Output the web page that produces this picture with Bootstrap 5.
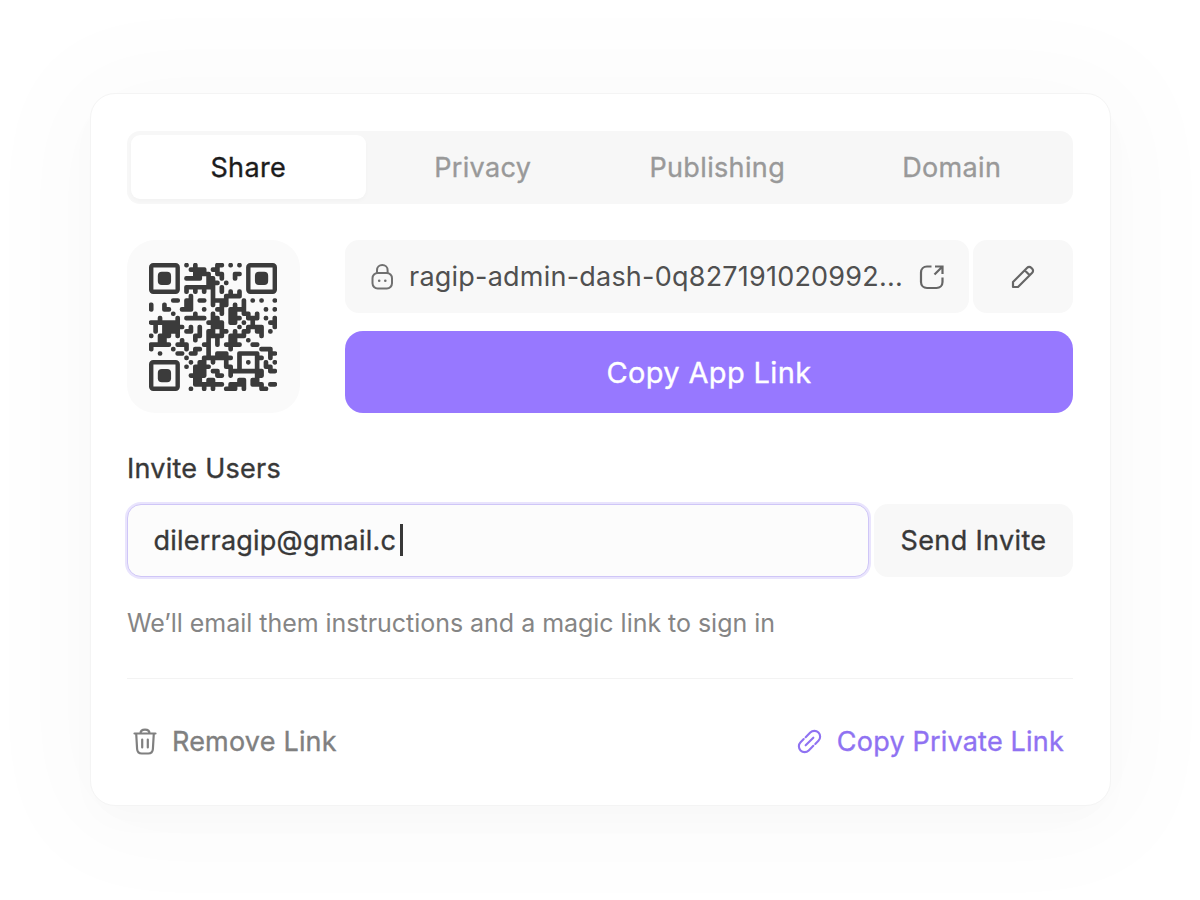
<!DOCTYPE html>
<html lang="en">
<head>
<meta charset="utf-8">
<meta name="viewport" content="width=device-width, initial-scale=1">
<title>Share</title>
<link href="https://cdn.jsdelivr.net/npm/bootstrap@5.3.0/dist/css/bootstrap.min.css" rel="stylesheet">
<style>
body{font-family:Inter,"Liberation Sans",sans-serif;background:#fff;height:900px;overflow:hidden;color:#383838;font-size:27px;line-height:36px}
.share-card{width:1021px;height:713px;margin-top:93px;border:1px solid #f4f4f4;border-radius:25px;background:#fff;padding:37px 36.5px 0;box-shadow:0 16px 40px -8px rgba(0,0,0,.022),0 6px 110px 36px rgba(0,0,0,.018)}
.semi{font-weight:400;-webkit-text-stroke:.35px currentColor}
.share-tabs{height:73px;padding:4px;background:#f7f7f7;border-radius:13px}
.share-tabs .nav-link{color:#999;height:64px;padding:1px 0 0;border-radius:9px;letter-spacing:.35px;display:flex;align-items:center;justify-content:center}
.share-tabs .nav-link.active{background:#fff;color:#1c1c1c;box-shadow:0 2px 4px rgba(0,0,0,.025)}
.share-row{margin-top:36px}
.share-link{width:728px}
.qr-tile{width:173px;height:173px;padding-right:1px;border-radius:28px;background:#fafafa}
.soft{background:#f8f8f8;border-radius:14px;height:73px}
.url-box{width:624px;padding-left:25.5px}
.url-text{color:#505050;letter-spacing:.22px;margin-left:15.5px;padding-top:1px}
.btn-copy{background:#9778ff;color:#fff;border-radius:18px;height:82px;margin-top:18px;padding:1px 0 0;font-size:29px;letter-spacing:.35px}
.btn-copy:hover{background:#8a66fa;color:#fff}
.invite-title{margin-top:38px;letter-spacing:.25px}
.invite-row{margin-top:16.5px}
.btn-send{width:199px;font-size:27px;color:#383838;letter-spacing:.35px;padding:2px 0 0;border:0}
.mail{width:742px;height:73px;margin-left:-.5px;border:1.5px solid #cfc6f7;border-radius:14px;background:#fcfcfc;box-shadow:0 0 0 2px #e9e4fd;padding:2px 0 0 26px;letter-spacing:.22px}
.caret{width:2.5px;height:32px;margin:-3px 0 0 4px;background:#383838}
.hint{color:#858585;font-size:25px;margin-top:28px;letter-spacing:-.03px}
.rule{height:1px;background:#f3f3f3;margin-top:37px}
.muted{color:#808080}
.violet{color:#8f72f2}
.foot{margin-top:45px;padding:0 9px 0 6px;letter-spacing:.2px}
.foot a{text-decoration:none}
.foot span{margin-left:15px}
svg{display:block;flex:none}
.ico{fill:none;stroke:currentColor;stroke-width:2.2;stroke-linecap:round;stroke-linejoin:round}
.ico.lock{color:#707070;stroke-width:2}
.ico.open,.ico.pen{color:#666}
.ico.open{stroke-linecap:butt;stroke-linejoin:miter;margin-right:24px}
</style>
</head>
<body>
<main class="share-card mx-auto">
  <nav class="share-tabs nav nav-pills nav-fill row-cols-4 g-0">
    <a class="nav-link semi active" href="#">Share</a>
    <a class="nav-link semi" href="#">Privacy</a>
    <a class="nav-link semi" href="#">Publishing</a>
    <a class="nav-link semi" href="#">Domain</a>
  </nav>

  <section class="share-row d-flex justify-content-between">
    <div class="qr-tile d-flex align-items-center justify-content-center">
      <svg id="qr" width="128" height="128" viewBox="0 0 29 29" fill="#3b3b3b"></svg>
    </div>
    <div class="share-link">
      <div class="d-flex gap-1">
        <div class="soft url-box d-flex align-items-center">
          <svg class="ico lock" width="23" height="28" viewBox="0 0 23 28"><path d="M6 10V7.200C6 4 8.300 2 11.300 2s5.300 2 5.300 5.200V10"/><rect x="1.500" y="10" width="19.500" height="15.500" rx="5.200"/><path d="M8.200 17.800h.01M14.300 17.800h.01" stroke-width="2.600"/></svg>
          <span class="url-text">ragip-admin-dash-0q827191020992...</span>
          <svg class="ico open ms-auto" width="26" height="26" viewBox="0 0 26 26"><path d="M12.500 2.500H8C4.500 2.500 2 5 2 8.500V18c0 3.500 2.500 6 6 6h9.500c3.500 0 6-2.500 6-6v-4.500M16 2.500h7.500V10M23.500 2.500 15.500 10.500"/></svg>
        </div>
        <button class="soft btn p-0 border-0 flex-fill d-flex align-items-center justify-content-center" aria-label="Edit">
          <svg class="ico pen" width="26" height="26" viewBox="0 0 26 26"><path d="M3 23v-5L17.200 3.800a2.800 2.800 0 0 1 4 0l1 1a2.800 2.800 0 0 1 0 4L8 23H3zM14.700 6.300l5 5"/></svg>
        </button>
      </div>
      <button class="btn btn-copy semi border-0 w-100">Copy App Link</button>
    </div>
  </section>

  <section>
    <div class="invite-title semi">Invite Users</div>
    <div class="invite-row d-flex justify-content-between">
      <div class="mail semi d-flex align-items-center"><span>dilerragip@gmail.c</span><span class="caret"></span></div>
      <button class="soft btn btn-send semi">Send Invite</button>
    </div>
    <div class="hint">We’ll email them instructions and a magic link to sign in</div>
  </section>

  <div class="rule"></div>
  <footer class="foot semi d-flex justify-content-between">
    <a href="#" class="muted d-flex align-items-center">
      <svg class="ico" width="24" height="27" viewBox="0 0 24 27"><path d="M1.500 5.500h21M7.500 5.500C7.500 3 9 1.700 12 1.700s4.500 1.300 4.500 3.800M3.200 5.500l.9 15.500c.2 3 1.700 4.500 4.700 4.500h6.400c3 0 4.500-1.500 4.700-4.500l.9-15.500M9.200 11.500v8M14.800 11.500v8"/></svg>
      <span>Remove Link</span>
    </a>
    <a href="#" class="violet d-flex align-items-center">
      <svg class="ico" width="25" height="25" viewBox="0 0 26 26"><path d="M9 17l8-8M9 8.500l4.800-4.800a6 6 0 0 1 8.500 8.500L19 15.500M17 17.500l-4.800 4.800a6 6 0 0 1-8.500-8.500L7 10.500"/></svg>
      <span>Copy Private Link</span>
    </a>
  </footer>
</main>

<script src="https://cdn.jsdelivr.net/npm/bootstrap@5.3.0/dist/js/bootstrap.bundle.min.js"></script>
<script>
// Dark modules of each QR row, as columns and column ranges; finder squares are added below.
const rows = [
  "8 10 15-16 18 20","9-12 14-15","10-13 15-16 19-20","8-11 13-14 16 19","13-15 17","8-14 16","8 10 12 14 16 18 20",
  "9 14 17-20","5-6 8-9 11-12 14-17 21 23 25 28","0 3 8-9 14 16-17 19 21","0 3-4 7-9 12 15-16 18-21 26 28",
  "5 10 14 16 18-19 21-22 24","2 6 8-12 14-15 18-20 22-24 26 28","0-6 13-16 18-19 21 23 27-28","1 3-7 9 11 14-16 20 22-25 28",
  "1 3-6 8-9 11 13-14 16-17 19 21-22 24-25 27","0 2-3 4 6 10-11 13-16 18-21 25","2-3 7 10 13 15 18-19 22","0-4 6-8 12-13 15 17-20 23-24",
  "0 5 8 10-11 13 18 25-27","2 6-7 9-10 13 15-17 20-24 27-28","8 12-13 14-18 20 24-25 27","9 11-12 14 17 20 22 24 26 28",
  "8 10-13 17-18 20 24 26-27","10-12 14-15 18-25 27-28","9-12 15-16 18 24-25","10-11 13-14 20-21 23-24","10-16 18-21 23-25 27-28","9 12 14 17-19 21 25-26"
];
const on = rows.map(r => { const a = Array(29).fill(false);
  r.split(" ").forEach(t => { const [s, e = s] = t.split("-").map(Number); for (let i = s; i <= e; i++) a[i] = true; }); return a; });
const at = (x, y) => !!(on[y] && on[y][x]);
let d = "";
for (let y = 0; y < 29; y++) for (let x = 0; x < 29; x++) if (at(x, y)) {
  const u = at(x, y-1), b = at(x, y+1), l = at(x-1, y), r = at(x+1, y), q = .46;
  const tl = u||l?0:q, tr = u||r?0:q, br = b||r?0:q, bl = b||l?0:q;
  const x0 = x-.03, y0 = y-.03, x1 = x+1.03, y1 = y+1.03;
  d += `M${x0+tl} ${y0}H${x1-tr}Q${x1} ${y0} ${x1} ${y0+tr}V${y1-br}Q${x1} ${y1} ${x1-br} ${y1}H${x0+bl}Q${x0} ${y1} ${x0} ${y1-bl}V${y0+tl}Q${x0} ${y0} ${x0+tl} ${y0}Z`;
}
const finder = (x, y) => `<rect x="${x+.5}" y="${y+.5}" width="6" height="6" rx=".45" fill="none" stroke="#3b3b3b"/><rect x="${x+2}" y="${y+2}" width="3" height="3" rx=".9"/>`;
document.getElementById("qr").innerHTML = `<path d="${d}"/>` + finder(0,0) + finder(22,0) + finder(0,22);
</script>
</body>
</html>
